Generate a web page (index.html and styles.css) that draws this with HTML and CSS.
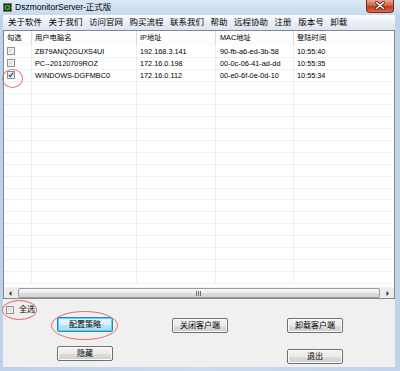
FILE: index.html
```html
<!DOCTYPE html>
<html lang="zh-CN">
<head>
<meta charset="utf-8">
<title>DszmonitorServer-正式版</title>
<link rel="stylesheet" href="styles.css">
</head>
<body>
<div class="window">
  <div class="titlebar">
    <svg class="appicon" viewBox="0 0 9 9" width="9" height="9">
      <rect x="0.5" y="0.5" width="8" height="8" fill="#1f2a22" stroke="#6e7a70"/>
      <circle cx="4.5" cy="4.5" r="2.8" fill="#3fae3a"/>
      <circle cx="4.5" cy="4.5" r="1.2" fill="#123015"/>
    </svg>
    <span class="title">DszmonitorServer-正式版</span>
    <div class="close">
      <svg viewBox="0 0 28 13" width="28" height="13">
        <path d="M10.5 3.5 L17.5 9.5 M17.5 3.5 L10.5 9.5" stroke="#5a1a10" stroke-width="3" stroke-linecap="round"/>
        <path d="M10.5 3.5 L17.5 9.5 M17.5 3.5 L10.5 9.5" stroke="#fff" stroke-width="1.6" stroke-linecap="round"/>
      </svg>
    </div>
  </div>
  <div class="frame">
    <div class="client">
      <div class="menubar">
        <span>关于软件</span><span>关于我们</span><span>访问官网</span><span>购买流程</span><span>联系我们</span><span>帮助</span><span>远程协助</span><span>注册</span><span>版本号</span><span>卸载</span>
      </div>
      <div class="list">
        <div class="rows">
          <div class="row head"><div class="c c1">勾选</div><div class="c c2">用户电脑名</div><div class="c c3">IP地址</div><div class="c c4">MAC地址</div><div class="c c5">登陆时间</div></div>
          <div class="row"><div class="c c1"><span class="cb"></span></div><div class="c c2">ZB79ANQ2GUXS4UI</div><div class="c c3">192.168.3.141</div><div class="c c4">90-fb-a6-ed-3b-58</div><div class="c c5">10:55:40</div></div>
          <div class="row"><div class="c c1"><span class="cb"></span></div><div class="c c2">PC--20120709ROZ</div><div class="c c3">172.16.0.198</div><div class="c c4">00-0c-06-41-ad-dd</div><div class="c c5">10:55:35</div></div>
          <div class="row"><div class="c c1"><span class="cb checked"><svg viewBox="0 0 8 8" width="6" height="6"><path d="M1 4.2 L3 6.3 L7 0.8" fill="none" stroke="#1d3f8c" stroke-width="1.5"/></svg></span></div><div class="c c2">WINDOWS-DGFMBC0</div><div class="c c3">172.16.0.112</div><div class="c c4">00-e0-6f-0e-0d-10</div><div class="c c5">10:55:34</div></div>
          <div class="row"><div class="c c1"></div><div class="c c2"></div><div class="c c3"></div><div class="c c4"></div><div class="c c5"></div></div>
          <div class="row"><div class="c c1"></div><div class="c c2"></div><div class="c c3"></div><div class="c c4"></div><div class="c c5"></div></div>
          <div class="row"><div class="c c1"></div><div class="c c2"></div><div class="c c3"></div><div class="c c4"></div><div class="c c5"></div></div>
          <div class="row"><div class="c c1"></div><div class="c c2"></div><div class="c c3"></div><div class="c c4"></div><div class="c c5"></div></div>
          <div class="row"><div class="c c1"></div><div class="c c2"></div><div class="c c3"></div><div class="c c4"></div><div class="c c5"></div></div>
          <div class="row"><div class="c c1"></div><div class="c c2"></div><div class="c c3"></div><div class="c c4"></div><div class="c c5"></div></div>
          <div class="row"><div class="c c1"></div><div class="c c2"></div><div class="c c3"></div><div class="c c4"></div><div class="c c5"></div></div>
          <div class="row"><div class="c c1"></div><div class="c c2"></div><div class="c c3"></div><div class="c c4"></div><div class="c c5"></div></div>
          <div class="row"><div class="c c1"></div><div class="c c2"></div><div class="c c3"></div><div class="c c4"></div><div class="c c5"></div></div>
          <div class="row"><div class="c c1"></div><div class="c c2"></div><div class="c c3"></div><div class="c c4"></div><div class="c c5"></div></div>
          <div class="row"><div class="c c1"></div><div class="c c2"></div><div class="c c3"></div><div class="c c4"></div><div class="c c5"></div></div>
          <div class="row"><div class="c c1"></div><div class="c c2"></div><div class="c c3"></div><div class="c c4"></div><div class="c c5"></div></div>
          <div class="row"><div class="c c1"></div><div class="c c2"></div><div class="c c3"></div><div class="c c4"></div><div class="c c5"></div></div>
          <div class="row"><div class="c c1"></div><div class="c c2"></div><div class="c c3"></div><div class="c c4"></div><div class="c c5"></div></div>
          <div class="row"><div class="c c1"></div><div class="c c2"></div><div class="c c3"></div><div class="c c4"></div><div class="c c5"></div></div>
          <div class="row"><div class="c c1"></div><div class="c c2"></div><div class="c c3"></div><div class="c c4"></div><div class="c c5"></div></div>
          <div class="row"><div class="c c1"></div><div class="c c2"></div><div class="c c3"></div><div class="c c4"></div><div class="c c5"></div></div>
        </div>
        <div class="hscroll">
          <div class="arrow"><svg viewBox="0 0 13 11" width="13" height="11"><path d="M5 5.5 L7.5 3 L7.5 8 Z" fill="#333"/></svg></div>
          <div class="thumb"><span class="grip"></span></div>
          <div class="arrow"><svg viewBox="0 0 13 11" width="13" height="11"><path d="M8 5.5 L5.5 3 L5.5 8 Z" fill="#333"/></svg></div>
        </div>
      </div>
      <div class="bottom">
        <div class="selall"><span class="cb"></span><span>全选</span></div>
        <div class="btns">
          <button class="btn focus">配置策略</button>
          <button class="btn low">关闭客户端</button>
          <button class="btn low">卸载客户端</button>
          <button class="btn">隐藏</button>
          <span></span>
          <button class="btn exit">退出</button>
        </div>
      </div>
    </div>
  </div>
  <div class="mark m1"></div>
  <div class="mark m2"></div>
  <div class="mark m3"></div>
</div>
</body>
</html>
```

FILE: styles.css
```css
* { box-sizing: border-box; }
html, body { margin: 0; padding: 0; }
body {
  width: 400px;
  height: 371px;
  overflow: hidden;
  font-family: "Liberation Sans", "Noto Sans CJK SC", sans-serif;
  color: #000;
  background: #c3d6ec;
}
.window {
  position: relative;
  width: 400px;
  height: 371px;
  display: flex;
  flex-direction: column;
  background: linear-gradient(90deg, #bcd2ea, #cadcef 50%, #bfd4eb);
}
.titlebar {
  height: 15px;
  display: flex;
  align-items: center;
  padding-left: 3px;
  background: linear-gradient(#dde9f6, #c6d9ee);
}
.appicon { display: block; margin-right: 3px; }
.title {
  flex: 1;
  font-size: 8.5px;
  line-height: 1;
  white-space: nowrap;
}
.close {
  align-self: flex-start;
  width: 28px;
  height: 13px;
  margin-right: 6px;
  border: 1px solid #7a2b1f;
  border-top: none;
  border-radius: 0 0 4px 4px;
  background: linear-gradient(#eaa896, #d0644c 45%, #c0381e 55%, #d9704f);
  overflow: hidden;
}
.close svg { display: block; margin: -1px 0 0 -1px; }
.frame {
  flex: 1;
  display: flex;
  padding: 0 5px 4px 3px;
  min-height: 0;
}
.client {
  flex: 1;
  display: flex;
  flex-direction: column;
  background: #f0f0f0;
  min-width: 0;
}
.menubar {
  height: 15px;
  display: flex;
  align-items: center;
  gap: 6.5px;
  padding-left: 5px;
  font-size: 8.5px;
  line-height: 1;
  white-space: nowrap;
  background: linear-gradient(#fbfcfe, #e9eef6 55%, #dce5f1);
}
.list {
  height: 269px;
  display: flex;
  flex-direction: column;
  border: 1px solid #828790;
  background: #fff;
  font-size: 7.3px;
}
.rows {
  flex: 1;
  overflow: hidden;
  min-height: 0;
}
.row {
  display: grid;
  grid-template-columns: 28px 105px 79px 78px 1fr;
  height: 11.875px;
}
.row.head { height: 15px; }
.c {
  display: flex;
  align-items: center;
  white-space: nowrap;
  overflow: hidden;
  border-right: 1px solid #f0f0f0;
  border-bottom: 1px solid #f2f2f2;
  padding-left: 3px;
  line-height: 1;
}
.head .c {
  border-right-color: #dadada;
  border-bottom-color: #fff;
  background: linear-gradient(#fff, #fafbfc);
}
.c5 { border-right: none; }
.head .c5 { border-right: none; }
.c4 { padding-left: 4px; }
.cb {
  display: flex;
  align-items: center;
  justify-content: center;
  width: 8px;
  height: 8px;
  border: 1px solid #8e8f8f;
  background: linear-gradient(135deg, #d2d2d2, #f6f6f6);
  box-shadow: inset 0 0 0 1px #f4f4f4;
}
.cb svg { display: block; }
.hscroll {
  height: 11px;
  display: flex;
  background: #ececec;
  border-top: 1px solid #f4f4f4;
}
.arrow {
  width: 13px;
  display: flex;
  align-items: center;
  justify-content: center;
}
.arrow svg { display: block; }
.thumb {
  flex: 1;
  margin: 0 1px;
  border: 1px solid #9b9b9b;
  border-radius: 2px;
  background: linear-gradient(#f7f7f7, #ececec 50%, #dcdcdc 51%, #d4d4d4);
  display: flex;
  align-items: center;
  justify-content: center;
}
.grip {
  width: 6px;
  height: 5px;
  background: repeating-linear-gradient(90deg, #6f6f6f 0 1px, transparent 1px 2px);
}
.bottom {
  flex: 1;
  padding: 7px 0 0 3px;
}
.selall {
  display: flex;
  align-items: center;
  gap: 5px;
  height: 8px;
  font-size: 8px;
  line-height: 1;
}
.btns {
  display: grid;
  grid-template-columns: repeat(3, 56px);
  grid-auto-rows: 15px;
  column-gap: 59px;
  row-gap: 14px;
  margin: 3px 0 0 51px;
}
.btn {
  margin: 0;
  padding: 0;
  height: 15px;
  font-family: "Liberation Sans", "Noto Sans CJK SC", sans-serif;
  font-size: 8px;
  line-height: 1;
  color: #000;
  border: 1px solid #707070;
  border-radius: 2px;
  background: linear-gradient(#f2f2f2, #ebebeb 50%, #dddddd 51%, #cfcfcf);
  box-shadow: inset 0 0 0 1px #fbfbfb;
}
.btn.focus {
  border-color: #3c7fb1;
  background: linear-gradient(#eaf6fd, #d9f0fc 50%, #bee6fd 51%, #a7d9f5);
  box-shadow: inset 0 0 0 1px #48d8fb;
}
.btn.low { margin-top: 1px; }
.btn.exit { margin-top: 3px; }
.mark {
  position: absolute;
  border: 1px solid #e57373;
  border-radius: 50%;
  pointer-events: none;
}
.m1 { left: 2px; top: 69px; width: 21px; height: 19px; }
.m2 { left: 2px; top: 300px; width: 35px; height: 20px; }
.m3 { left: 51px; top: 311px; width: 67px; height: 29px; }
```
